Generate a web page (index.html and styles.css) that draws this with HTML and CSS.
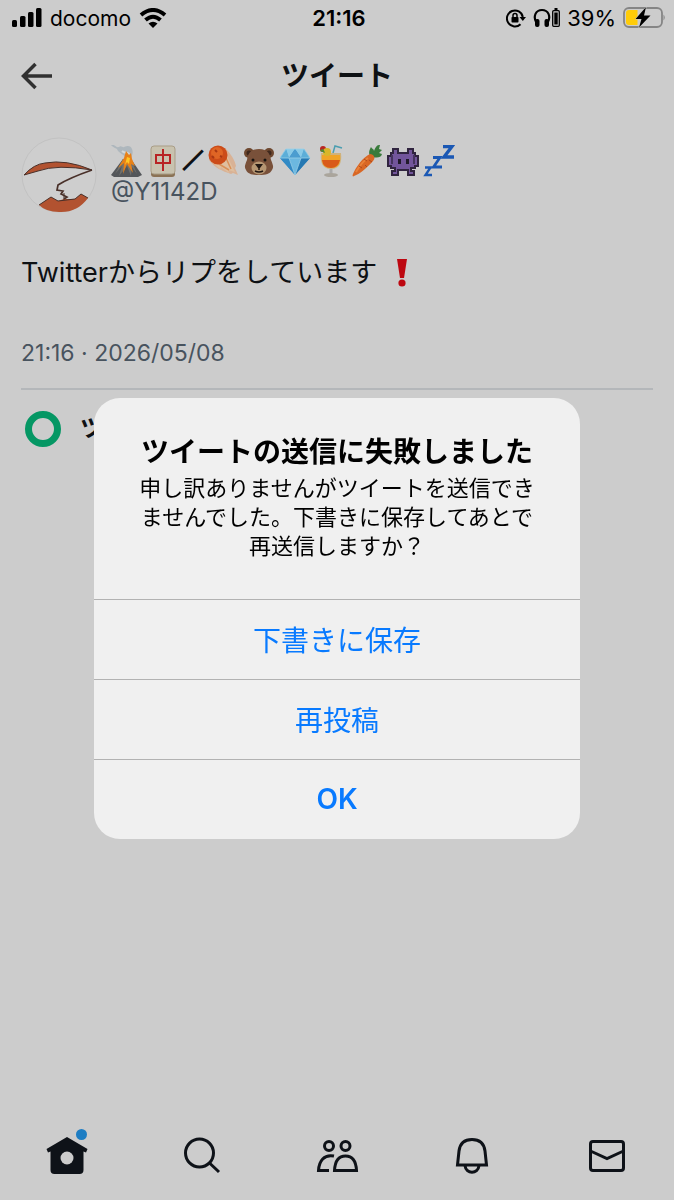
FILE: index.html
```html
<!DOCTYPE html>
<html lang="ja">
<head>
<meta charset="utf-8">
<meta name="viewport" content="width=device-width, initial-scale=1">
<title>ツイート</title>
<link rel="stylesheet" href="styles.css">
</head>
<body>
<div class="app">
  <div class="status">
    <div class="status-side">
      <svg width="30" height="20" viewBox="0 0 30 20" aria-hidden="true"><rect x="0" y="12" width="5" height="7" rx="1.5"/><rect x="8" y="8" width="5.500" height="11" rx="1.500"/><rect x="16" y="4" width="5.500" height="15" rx="1.500"/><rect x="24" y="0" width="5.500" height="19" rx="1.500"/></svg>
      <span class="carrier">docomo</span>
      <svg width="28" height="20" viewBox="0 0 28 20" fill="none" stroke="#000" stroke-width="4" aria-hidden="true"><path d="M2 7Q14-3 26 7"/><path d="M6.500 12Q14 5.500 21.500 12"/><path d="M14 20L9.500 15.600Q14 12 18.500 15.600Z" fill="#000" stroke="none"/></svg>
    </div>
    <time class="clock">21:16</time>
    <div class="status-side status-end">
      <svg width="20" height="20" viewBox="0 0 20 20" fill="none" stroke="#000" stroke-width="2" aria-hidden="true"><path d="M14.500 16.200A8 8 0 1 1 16.800 9"/><path d="M13.500 9H20L16.800 13Z" fill="#000" stroke="none"/><rect x="5.500" y="9" width="7" height="5.500" rx=".8" fill="#000" stroke="none"/><path d="M7 9V7.500a2 2 0 0 1 4 0V9" stroke-width="1.500"/></svg>
      <svg width="27" height="20" viewBox="0 0 27 20" aria-hidden="true"><path d="M3.500 15C-.5 8 3 2 9 2s9.500 6 5.500 13" fill="none" stroke="#000" stroke-width="2.200"/><rect x="2" y="11" width="4.500" height="8" rx="2"/><rect x="11.500" y="11" width="4.500" height="8" rx="2"/><rect x="19.700" y="2.700" width="6.600" height="15.600" rx="1" fill="none" stroke="#000" stroke-width="1.300"/><rect x="21.300" y="4.500" width="3.400" height="12"/><rect x="21.500" y="0" width="3" height="2"/></svg>
      <span class="percent">39%</span>
      <svg width="43" height="24" viewBox="0 0 43 24" aria-hidden="true"><rect x="1" y="2" width="38" height="19" rx="5" fill="none" stroke="#858585" stroke-width="1.800"/><path d="M40.500 8.500q2.500 3 0 6Z" fill="#858585"/><path d="M6 4h8.500v15H6a3 3 0 0 1-3-3V7a3 3 0 0 1 3-3Z" fill="#ffcc08"/><path d="M23 1L12.500 13h6L16 21.500 27.500 9.500H21Z" stroke="#ccc" stroke-width="1" paint-order="stroke"/></svg>
    </div>
  </div>

  <header class="topbar">
    <button class="back" type="button" aria-label="戻る"><svg width="32" height="28" viewBox="0 0 32 28" fill="none" stroke="#303030" stroke-width="3.500"><path d="M32 14H4M15.500 2L3.500 14 15.500 26"/></svg></button>
    <h1 class="title">ツイート</h1>
  </header>

  <main class="tweet">
    <div class="author">
      <svg class="avatar" width="76" height="76" viewBox="0 0 76 76" aria-hidden="true"><circle cx="38" cy="38" r="37" fill="#cecece" stroke="#c2c2c2"/><path d="M3 38Q13 27 24 26Q45 22 71 33Q36 27 17 34Z" fill="#b25230" stroke="#493029"/><path d="M71 33Q48 41 37 48L36 53 42 54 40 57 46 60 43 62" fill="none" stroke="#493029" stroke-width="1.700"/><path d="M18 68L30 60 37 64 43 62 54 62 60 57 67 61Q56 76 38 75 25 75 18 68Z" fill="#b25230"/><path d="M18 68L30 60 37 64 54 62 60 57 67 61M43 56V63" fill="none" stroke="#493029"/></svg>
      <div class="names">
        <div class="display-name">
          <svg class="emoji" viewBox="0 0 32 32" role="img" aria-label="火山"><path d="M15 13C13 9 7 8 6 4c-3-1-5-3-6-4 4-1 5 3 8 2 2-2 4 1 5 0 4-2 7-1 8 2 2 5-1 7-1 10Z" fill="#aeb7bd"/><path d="M11 6c4 4 6-1 8 5" fill="none" stroke="#d4d8da" stroke-width="2"/><path d="M0 30l12-16h8l11 16-4 2H3Z" fill="#53565a"/><path d="M12 14l-8 15 7-8-3 10 8-10 4 10 1-9 5 7-6-15Z" fill="#70706d"/><path d="M13 13l2-7 3 4 2-2 1 6 3 7-4-2 2 9-6-9-4 10 1-11-6 5Z" fill="#e78118"/><path d="M16 12l3 1-1 6-2-2-2 3Z" fill="#ffc626"/></svg>
          <svg class="emoji" viewBox="0 0 32 32" role="img" aria-label="中"><rect x="4" y="2" width="24" height="30" rx="3" fill="#8b7255"/><rect x="4" y="1" width="24" height="28" rx="3" fill="#c8c2af" stroke="#a99d86"/><path d="M9 10h14v8H9ZM16 4v22" fill="none" stroke="#b82424" stroke-width="2"/></svg>
          <span class="slash">／</span>
          <svg class="emoji" viewBox="0 0 32 32" role="img" aria-label="彗星"><path d="M2 15L18 3C25 10 28 16 29 21l-1 2 3 7-5-2-2 1C15 26 8 23 2 15Z" fill="#d9b295"/><path d="M5 17L18 7 28 27 21 25 22 28 14 22 13 24Z" fill="#dfbf9f"/><path d="M12 19l10 6M19 13l5 11" stroke="#d99058" stroke-width="1.500"/><circle cx="11" cy="10" r="9.500" fill="#cc4c19"/><circle cx="10" cy="8" r="6" fill="#df6525"/><path d="M8 5l2 2M13 11l2 1M5 11l2 2" stroke="#a83813" stroke-width="2"/></svg>
          <svg class="emoji" viewBox="0 0 32 32" role="img" aria-label="くま"><circle cx="6" cy="8" r="5" fill="#6d472f"/><circle cx="26" cy="8" r="5" fill="#6d472f"/><circle cx="6" cy="8" r="2.500" fill="#3e281d"/><circle cx="26" cy="8" r="2.500" fill="#3e281d"/><path d="M16 4C25 4 27 9 28 15c2 5 3 7 1 10-2 4-6 5-13 5S5 29 3 25c-2-3-1-5 1-10C5 9 7 4 16 4Z" fill="#79513a"/><ellipse cx="16" cy="23" rx="7.500" ry="6.500" fill="#b59672"/><circle cx="10" cy="15" r="1.500" fill="#161311"/><circle cx="22" cy="15" r="1.500" fill="#161311"/><path d="M12 19h8l-3 4h-2Z" fill="#211712"/><path d="M16 22v3M12 26q4 2 8 0" fill="none" stroke="#211712" stroke-width="1.500"/></svg>
          <svg class="emoji" viewBox="0 0 32 32" role="img" aria-label="宝石"><path d="M7 4h18l6 9-15 17L1 13Z" fill="#3d8ec4"/><path d="M7 4l3 9H1ZM25 4l6 9h-9Z" fill="#5caed8"/><path d="M7 4h9l-6 9ZM16 4h9l-3 9Z" fill="#89cae7"/><path d="M16 4l6 9H10Z" fill="#4b9dd0"/><path d="M10 13h12l-6 17Z" fill="#6cb8e0"/><path d="M1 13h9l6 17Z" fill="#328ac5"/><path d="M22 13h9L16 30Z" fill="#2578b2"/><path d="M7 4h18l6 9H1ZM10 13l6 17 6-17" fill="none" stroke="#9bd0e8" stroke-width=".8"/></svg>
          <svg class="emoji" viewBox="0 0 32 32" role="img" aria-label="カクテル"><path d="M18 8l2-7 7 2" fill="none" stroke="#4b9eb0" stroke-width="1.500"/><path d="M6 8h20c1 9-1 16-10 16S5 17 6 8Z" fill="#cfb27c"/><path d="M7 10h18c1 9-2 13-9 13S6 19 7 10Z" fill="#f0a426"/><path d="M7 15h18q-2 8-9 8-8 0-9-8Z" fill="#d95a19"/><path d="M16 24v5" stroke="#aaa" stroke-width="3"/><ellipse cx="16" cy="30" rx="7" ry="2" fill="#aaa59c"/><circle cx="8" cy="4" r="3" fill="#b92622"/><circle cx="12" cy="7" r="4" fill="#d9b629"/><path d="M5 6q3-5 5 2" fill="#4f8a36"/></svg>
          <svg class="emoji" viewBox="0 0 32 32" role="img" aria-label="にんじん"><path d="M19 11c-2-4 0-7 1-9 1 2 3 2 3 4 2-5 3-6 6-6l-1 4 3 1-3 3 3 1c-1 4-5 4-10 3Z" fill="#397b3b"/><path d="M19 9c4 0 6 4 3 7C17 22 9 29 3 31c-1 1-2 0-1-2C5 22 12 12 19 9Z" fill="#d96725"/><path d="M17 13C12 16 8 22 5 27" fill="none" stroke="#e98239" stroke-width="2"/><path d="M13 14l3 2M8 21l3 2M18 15l3 2M14 20l2 2" stroke="#ac491c"/></svg>
          <svg class="emoji" viewBox="0 0 32 32" role="img" aria-label="モンスター"><path d="M6 4h5v4h10V4h5v4h2v3h3v10h-3v2h-4v3h3v4h-6v-5H11v5H5v-4h3v-3H4v-2H1V11h3V8h2Z" fill="#72559b" stroke="#30243f" stroke-width="2"/><path d="M11 14h3v5h-3zM19 14h3v5h-3z" fill="#211a2b"/><path d="M5 10v9M27 10v9" stroke="#46345f" stroke-width="2"/></svg>
          <svg class="emoji" viewBox="0 0 32 32" role="img" aria-label="zzz" fill="none" stroke="#1b58b4"><path d="M20 1.500h9L21 12h10" stroke-width="3.400"/><path d="M10 12.500h7L10.500 22H19" stroke-width="2.800"/><path d="M2 22.500h5.500L2.500 30H9" stroke-width="2.400"/></svg>
        </div>
        <div class="handle">@Y1142D</div>
      </div>
    </div>
    <p class="text">Twitterからリプをしています<svg width="28" height="28" viewBox="0 0 28 28" role="img" aria-label="！"><path d="M9 0h10l-3 19h-4Z" fill="#bd0710"/><circle cx="14" cy="24" r="3.600" fill="#bd0710"/></svg></p>
    <time class="date">21:16 · 2026/05/08</time>
    <div class="source"><span class="ring"></span><span class="source-name">ツイート</span></div>
  </main>

  <nav class="tabs" aria-label="メイン">
    <button class="tab" type="button" aria-label="ホーム"><svg width="44" height="50" viewBox="0 0 44 50"><path d="M22 9L42.500 21 41 24.500 38.500 23.500V42q0 4-4 4h-25q-4 0-4-4V23.500L3 24.500 1.500 21Z" fill="#0e1218"/><circle cx="22" cy="30" r="6.500" fill="#ccc"/><circle cx="36.500" cy="6.500" r="5.500" fill="#1d7dc3"/></svg></button>
    <button class="tab" type="button" aria-label="検索"><svg class="line" width="44" height="50" viewBox="0 0 44 50"><circle cx="19.500" cy="25" r="14"/><path d="M29.500 35L39 44"/></svg></button>
    <button class="tab" type="button" aria-label="コミュニティ"><svg class="line" width="44" height="50" viewBox="0 0 44 50"><circle cx="14" cy="18" r="4.500"/><circle cx="30.500" cy="18" r="4.500"/><path d="M19 28C9 26 4 33 3.500 42.500H14M19.500 42.500C20 33 24 28 30.500 28S41 33 41.500 42.500Z"/></svg></button>
    <button class="tab" type="button" aria-label="通知"><svg class="line" width="44" height="50" viewBox="0 0 44 50"><path d="M7.500 37L9 23C10 15 15 11.500 22 11.500S34 15 35 23L36.500 37Z"/><path d="M15 37.500C16 46.500 28 46.500 29 37.500"/></svg></button>
    <button class="tab" type="button" aria-label="メッセージ"><svg class="line" width="44" height="50" viewBox="0 0 44 50"><rect x="5.500" y="13.500" width="33" height="29" rx="2.500"/><path d="M5.500 23L22 30.500 38.500 23"/></svg></button>
  </nav>
</div>

<div class="overlay">
  <section class="alert" role="alertdialog" aria-modal="true" aria-labelledby="alert-title" aria-describedby="alert-text">
    <div class="alert-body">
      <h2 class="alert-title" id="alert-title">ツイートの送信に失敗しました</h2>
      <p class="alert-text" id="alert-text">申し訳ありませんがツイートを送信できませんでした。下書きに保存してあとで再送信しますか？</p>
    </div>
    <button class="action" type="button">下書きに保存</button>
    <button class="action" type="button">再投稿</button>
    <button class="action primary" type="button">OK</button>
  </section>
</div>
</body>
</html>
```
FILE: styles.css
```css
* { box-sizing: border-box; }
body {
  margin: 0;
  background: #ccc;
  color: #0e1114;
  font-family: Inter, "Noto Sans CJK JP", sans-serif;
}
h1, h2, p { margin: 0; }
button {
  border: 0;
  padding: 0;
  background: none;
  color: inherit;
  font: inherit;
  cursor: pointer;
}
svg { display: block; flex: none; }

.app {
  display: flex;
  flex-direction: column;
  min-height: 100vh;
}

.status {
  display: grid;
  grid-template-columns: 1fr auto 1fr;
  align-items: center;
  height: 36px;
  padding: 0 8px 0 12px;
  color: #000;
}
.status-side { display: flex; align-items: center; gap: 8px; }
.status-end { gap: 7px; justify-content: flex-end; }
.carrier { font-size: 21px; }
.percent { font-size: 22px; }
.clock { font-size: 22px; font-weight: 600; }

.topbar {
  display: grid;
  grid-template-columns: 32px 1fr 32px;
  align-items: center;
  height: 80px;
  padding: 0 20px;
}
.title {
  font-size: 28px;
  line-height: 40px;
  text-align: center;
}

.tweet { flex: 1; padding: 21px 21px 20px; }
.author { display: flex; align-items: center; gap: 14px; }
.display-name { display: flex; align-items: center; gap: 4px; height: 34px; }
.emoji { width: 32px; height: 32px; }
.slash {
  width: 20px;
  font-size: 20px;
  line-height: 34px;
  -webkit-text-stroke: 2px #0e1114;
}
.handle { color: #48535e; font-size: 24px; line-height: 28px; }
.text {
  display: flex;
  align-items: center;
  gap: 11px;
  margin-top: 40px;
  font-size: 27px;
  line-height: 40px;
}
.date {
  display: block;
  padding: 44px 0 19px;
  border-bottom: 2px solid #b4b7ba;
  color: #48535e;
  font-size: 23px;
  line-height: 32px;
}
.source { display: flex; align-items: center; gap: 19px; padding: 21px 4px; }
.ring { width: 36px; height: 36px; border: 7px solid #059764; border-radius: 50%; }
.source-name { font-size: 24px; font-weight: 700; line-height: 32px; }

.tabs { display: grid; grid-template-columns: repeat(5, 1fr); padding: 0 0 22px; }
.tab { display: flex; justify-content: center; }
.line { fill: none; stroke: #0e1218; stroke-width: 3; }

.overlay {
  position: fixed;
  inset: 0;
  display: flex;
  align-items: center;
  justify-content: center;
  padding-top: 36px;
}
.alert {
  width: 72%;
  overflow: hidden;
  border-radius: 26px;
  background: #f0f0f0;
  color: #000;
  text-align: center;
}
.alert-body { padding: 32px 38px 38px; }
.alert-title { font-size: 28px; font-weight: 700; line-height: 44px; }
.alert-text { font-size: 22px; line-height: 29px; }
.action {
  display: block;
  width: 100%;
  height: 80px;
  border-top: 1px solid #b2b2b2;
  color: #087aff;
  font-size: 28px;
}
.primary { font-weight: 600; }
```
